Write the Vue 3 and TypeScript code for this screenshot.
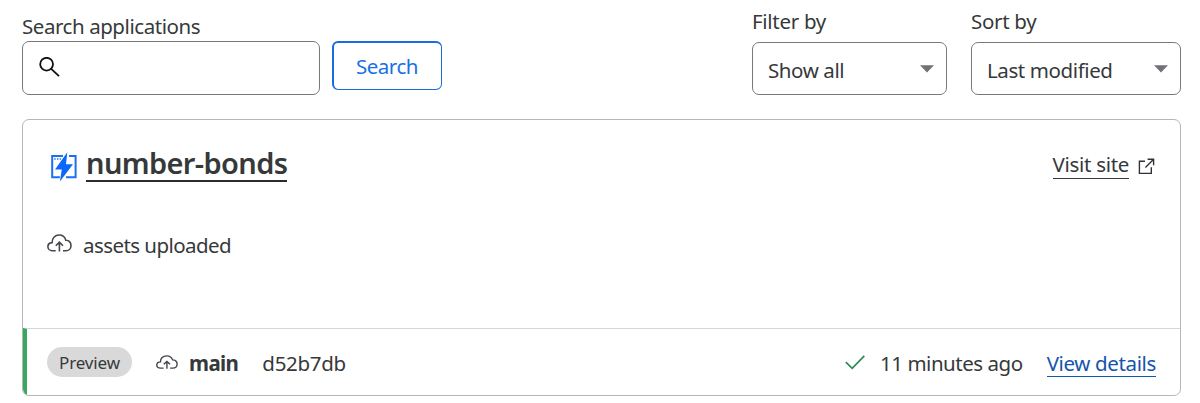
<script setup lang="ts">
const filters = [
  { label: 'Filter by', value: 'Show all', kind: 'filter' },
  { label: 'Sort by', value: 'Last modified', kind: 'sort' },
]
const project = {
  name: 'number-bonds',
  source: 'assets uploaded',
  environment: 'Preview',
  branch: 'main',
  commit: 'd52b7db',
  age: '11 minutes ago',
}
</script>

<template>
  <main class="page">
    <div class="toolbar">
      <div class="search">
        <label class="search-label" for="q"><span class="t-label">Search applications</span></label>
        <div class="search-row">
          <div class="search-box">
            <svg class="magnifier" width="22" height="22" viewBox="0 0 22 22" fill="none" stroke="#111" stroke-width="1.8">
              <circle cx="7.6" cy="7.2" r="6.4" />
              <path d="M12.2 11.8L20 19.2" />
            </svg>
            <input id="q" type="text" />
          </div>
          <button class="search-button" type="button"><span class="t-button">Search</span></button>
        </div>
      </div>
      <div class="filters">
        <div v-for="f in filters" :key="f.kind" class="filter" :class="f.kind">
          <div class="filter-label"><span>{{ f.label }}</span></div>
          <div class="select">
            <span class="select-value">{{ f.value }}</span>
            <svg width="14" height="8" viewBox="0 0 14 8"><path d="M0 0.3H14L7 7.6Z" fill="#6f7277" /></svg>
          </div>
        </div>
      </div>
    </div>

    <section class="card">
      <div class="card-main">
        <div class="card-head">
          <svg class="bolt" width="26" height="30" viewBox="0 0 26 30">
            <path d="M12 4H1.2V25.3H9M18 4H24.6V25.3H15" fill="none" stroke="#1a70f2" stroke-width="2" />
            <path d="M3.3 7h1.4M6 7h1.4M8.7 7h1.4" stroke="#1a70f2" stroke-width="1.5" />
            <path d="M16.3 0.3L4 17.4H10.8L8.9 29.6L22 12.3H15Z" fill="#0c67fa" stroke="#fff" stroke-width="1.4" paint-order="stroke" />
          </svg>
          <a class="title"><span>{{ project.name }}</span></a>
          <a class="visit"><span>Visit site</span></a>
          <svg class="external" width="17" height="17" viewBox="0 0 17 17" fill="none" stroke="#303236" stroke-width="1.4">
            <path d="M7 3.3H1.4V15.4H13.3V9.3M9.6 1.3H15.6V7.3M15.4 1.5L7.4 9.4" />
          </svg>
        </div>
        <div class="source">
          <svg class="cloud" width="25" height="19" viewBox="0 0 25 19" fill="none" stroke="#45474b" stroke-width="1.6">
            <path d="M8.7 16.7H5.2C2.7 16.7 0.9 14.9 0.9 12.7C0.9 10.4 2.7 8.7 5.1 8.6C4.8 4.4 8 1 12.1 1C15.3 1 18 3 18.8 6.2C21.9 6 24 8.4 24 11.4C24 14.5 21.9 16.7 19 16.7H16M12.4 17.5V8.3M8.8 11.8L12.4 8.2L16 11.8" />
          </svg>
          <span class="source-text">{{ project.source }}</span>
        </div>
      </div>
      <div class="deployment">
        <span class="badge"><span>{{ project.environment }}</span></span>
        <svg class="cloud-small" width="22" height="15" viewBox="0 0 25 19" preserveAspectRatio="none" fill="none" stroke="#45474b" stroke-width="1.6">
          <path d="M8.7 16.7H5.2C2.7 16.7 0.9 14.9 0.9 12.7C0.9 10.4 2.7 8.7 5.1 8.6C4.8 4.4 8 1 12.1 1C15.3 1 18 3 18.8 6.2C21.9 6 24 8.4 24 11.4C24 14.5 21.9 16.7 19 16.7H16M12.4 17.5V8.3M8.8 11.8L12.4 8.2L16 11.8" />
        </svg>
        <strong class="branch">{{ project.branch }}</strong>
        <span class="commit">{{ project.commit }}</span>
        <svg class="check" width="20" height="15" viewBox="0 0 20 15" fill="none" stroke="#2f8a55" stroke-width="1.7">
          <path d="M0.8 7.1L7.2 13.4L19.3 0.9" />
        </svg>
        <span class="age">{{ project.age }}</span>
        <a class="details"><span>View details</span></a>
      </div>
    </section>
  </main>
</template>

<style>
body {
  background: #fff;
}
</style>

<style scoped>
.page {
  box-sizing: border-box;
  width: 1200px;
  height: 403px;
  padding: 0 19px 0 22px;
  overflow: hidden;
  font-family: "Noto Sans", "Open Sans", sans-serif;
  font-size: 20.5px;
  line-height: 28px;
  color: #36393a;
  white-space: nowrap;
}
.toolbar {
  display: flex;
  justify-content: space-between;
  height: 119px;
}
.search-label {
  display: block;
  height: 29px;
  padding-top: 12px;
}
.t-label { letter-spacing: -0.44px; }
.search-row {
  display: flex;
  align-items: flex-start;
}
.search-box {
  box-sizing: border-box;
  display: flex;
  width: 298px;
  height: 54px;
  border: 1px solid #77797d;
  border-radius: 7px;
}
.magnifier {
  flex: none;
  margin: 15px 0 0 16px;
}
input {
  width: 240px;
  border: 0;
  outline: 0;
  background: transparent;
  font: inherit;
}
.search-button {
  box-sizing: border-box;
  width: 110px;
  height: 49px;
  margin-left: 12px;
  padding: 0 1px 1px 0;
  border: solid #1a6be0;
  border-width: 2px 1px 1px 2px;
  border-radius: 6px;
  background: #fff;
  color: #1870e6;
  font: inherit;
}
.t-button { letter-spacing: -0.5px; }
.filters {
  display: flex;
  gap: 24px;
}
.filter-label {
  height: 35px;
  padding-top: 7px;
  letter-spacing: -0.3px;
}
.select {
  box-sizing: border-box;
  display: flex;
  align-items: center;
  justify-content: space-between;
  height: 53px;
  padding: 2px 12px 0 15px;
  border: 1px solid #77797d;
  border-radius: 7px;
}
.select svg { margin-bottom: 2px; }
.select-value { letter-spacing: -0.4px; }
.filter.filter { width: 195px; }
.filter.sort { width: 210px; }
.card {
  box-sizing: border-box;
  width: 1159px;
  height: 277px;
  overflow: hidden;
  border: 1px solid #b5b6b8;
  border-radius: 7px;
}
.card-main {
  height: 208px;
  padding: 0 25px 0 24px;
}
.card-head {
  display: flex;
  align-items: flex-start;
  padding-top: 30px;
  height: 81px;
}
.bolt { margin: 2px 0 0 3.5px; }
.title {
  height: 30px;
  margin-left: 9.5px;
  border-bottom: 2px solid #2c2c2e;
  font-size: 29px;
  line-height: 26px;
  font-weight: 600;
  letter-spacing: -0.62px;
}
.visit {
  height: 28px;
  margin-left: auto;
  border-bottom: 1px solid #36393a;
  letter-spacing: -0.3px;
}
.external { margin: 8px 0 0 9px; }
.source {
  display: flex;
  align-items: center;
}
.cloud { margin-bottom: 3px; }
.source-text {
  margin-left: 11px;
  letter-spacing: -0.56px;
}
.deployment {
  box-sizing: border-box;
  display: flex;
  align-items: center;
  height: 67px;
  padding: 2px 24px 0 20px;
  border-top: 1px solid #d5d6d8;
  border-left: 4px solid #38a860;
}
.badge {
  width: 85px;
  height: 30px;
  margin-bottom: 3px;
  border-radius: 15px;
  background: #d9d9d9;
  font-size: 17px;
  line-height: 31px;
  text-align: center;
  letter-spacing: -0.15px;
}
.cloud-small { margin: 0 0 2px 24px; }
.branch {
  margin-left: 11px;
  letter-spacing: -0.6px;
}
.commit {
  margin-left: 24px;
  letter-spacing: -0.3px;
}
.check { margin: 0 0 2px auto; }
.age {
  margin-left: 15px;
  letter-spacing: -0.47px;
}
.details {
  box-sizing: border-box;
  height: 28px;
  margin-left: 24px;
  border-bottom: 1px solid #1257a8;
  color: #1454ad;
  letter-spacing: -0.36px;
}
</style>
